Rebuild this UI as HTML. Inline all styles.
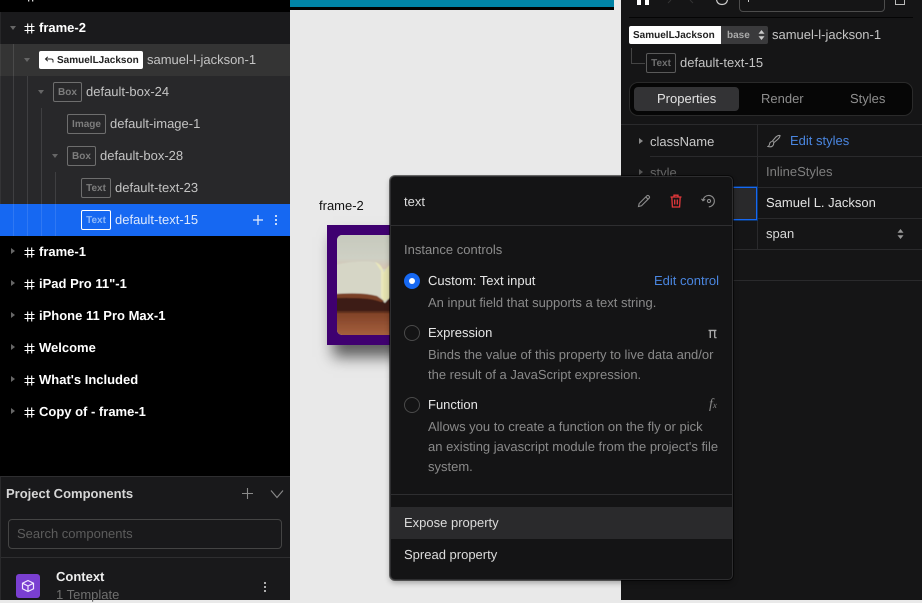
<!DOCTYPE html>
<html><head><meta charset="utf-8"><style>
*{box-sizing:border-box}
html,body{margin:0;padding:0;width:922px;height:600px;overflow:hidden;background:#e9e9e9;font-family:"Liberation Sans",sans-serif;text-rendering:geometricPrecision}
.a{position:absolute}
.t{position:absolute;white-space:nowrap;font-size:13px;line-height:16px}
.n{color:#c4c4c4}
.b{color:#fff;font-weight:700}
.tag{position:absolute;height:20px;border:1px solid #6e6e6e;border-radius:2px;color:#7d7d7d;font-size:10px;font-weight:700;line-height:20px;text-align:center}
.tri{position:absolute;width:0;height:0;border-left:3.5px solid transparent;border-right:3.5px solid transparent;border-top:4px solid #666}
.trr{position:absolute;width:0;height:0;border-top:3.5px solid transparent;border-bottom:3.5px solid transparent;border-left:4px solid #666}
.vl{position:absolute;width:1px;background:rgba(255,255,255,.11)}
.hash{position:absolute;width:11px;height:11px}
.desc{position:absolute;white-space:nowrap;font-size:13px;line-height:20px;color:#8a8a8a}
</style></head><body>

<!-- canvas -->
<div class="a" style="left:290px;top:0;width:324px;height:7px;background:#0083a6"></div>
<div class="a" style="left:290px;top:7px;width:324px;height:3px;background:#000"></div>
<div class="t" style="left:319px;top:198px;color:#111">frame-2</div>
<div class="a" style="left:327px;top:225px;width:100px;height:120px;background:#3f0070;box-shadow:6px 12px 14px rgba(0,0,0,.6)"></div>
<svg class="a" style="left:337px;top:235px;border-radius:5px;background:#d6d6c6" width="60" height="100" viewBox="0 0 60 100">
<defs><linearGradient id="bg" x1="0" y1="0" x2="0" y2="1"><stop offset="0" stop-color="#c6c9bd"/><stop offset=".7" stop-color="#ced0c4"/><stop offset="1" stop-color="#d6c4b2"/></linearGradient>
<linearGradient id="tb" x1="0" y1="0" x2="0" y2="1"><stop offset="0" stop-color="#7e4026"/><stop offset="1" stop-color="#a8623f"/></linearGradient>
<filter id="sf"><feGaussianBlur stdDeviation=".6"/></filter></defs>
<g filter="url(#sf)">
<rect x="-2" y="-2" width="64" height="104" fill="#d6d6c6"/>
<rect x="-2" y="-2" width="64" height="36" fill="url(#bg)"/>
<path d="M-2 30 Q20 25 38 27 Q44 29 46 36 L46 60 L-2 60Z" fill="#d6d6c6"/>
<path d="M38 27 Q45 29 47 38 L47 66 L44 62 L44 36Z" fill="#e9e7bc"/>
<path d="M46 40 Q50 28 62 27 L62 60 L46 66Z" fill="#e4e2b0"/>
<rect x="-2" y="76" width="64" height="26" fill="url(#tb)"/>
<path d="M-2 60 Q26 58 40 62 Q46 66 48 68 Q52 62 62 58 L62 78 L-2 78Z" fill="#3d1a12"/>
<path d="M-2 59 Q26 57 40 61 L47 66 L44 67 Q34 62 -2 63Z" fill="#7a4026"/>
<rect x="-2" y="76" width="64" height="2" fill="#5d2f1c"/>
</g>
</svg>

<!-- left panel -->
<div class="a" style="left:0;top:0;width:290px;height:476px;background:#000"></div>
<div class="a" style="left:0;top:12px;width:290px;height:32px;background:#1a1a1c"></div>
<div class="a" style="left:0;top:44px;width:290px;height:32px;background:#343434"></div>
<div class="a" style="left:0;top:76px;width:290px;height:128px;background:#28282a"></div>
<div class="a" style="left:0;top:204px;width:290px;height:32px;background:#1668f2"></div>
<div class="vl" style="left:13px;top:44px;height:192px"></div>
<div class="vl" style="left:27px;top:76px;height:160px"></div>
<div class="vl" style="left:41px;top:108px;height:128px"></div>
<div class="vl" style="left:55px;top:172px;height:64px"></div>
<div class="a" style="left:0;top:12px;width:1px;height:192px;background:rgba(255,255,255,.06)"></div>

<svg width="0" height="0" style="position:absolute"><defs><g id="h" fill="none" stroke="#fff" stroke-width="1.1"><path d="M3.700 .5V10.500M7.700 .5V10.500M.5 3.500H10.500M.5 7.500H10.500"/></g></defs></svg>

<!-- top cut row -->
<svg class="hash" style="left:25px;top:-9px"><use href="#h"/></svg>

<!-- frame-2 -->
<div class="tri" style="left:10px;top:26px"></div>
<svg class="hash" style="left:24px;top:23px"><use href="#h"/></svg>
<div class="t b" style="left:39px;top:20px">frame-2</div>

<div class="tri" style="left:24px;top:58px"></div>
<div class="a" style="left:39px;top:51px;width:104px;height:18px;background:#fff;border-radius:2px"></div>
<svg class="a" style="left:44px;top:55px" width="10" height="10" viewBox="0 0 10 10" fill="none" stroke="#222" stroke-width="1"><path d="M9 7.500V5.500Q9 4 7 4H1.500M3.800 1.800L1.500 4L3.800 6.200"/></svg>
<div class="t" style="left:57px;top:53px;font-size:10px;font-weight:700;color:#222">SamuelLJackson</div>
<div class="t n" style="left:147px;top:52px">samuel-l-jackson-1</div>

<div class="tri" style="left:38px;top:90px"></div>
<div class="tag" style="left:53px;top:82px;width:29px">Box</div>
<div class="t n" style="left:86px;top:84px">default-box-24</div>

<div class="tag" style="left:67px;top:114px;width:39px">Image</div>
<div class="t n" style="left:110px;top:116px">default-image-1</div>

<div class="tri" style="left:52px;top:154px"></div>
<div class="tag" style="left:67px;top:146px;width:29px">Box</div>
<div class="t n" style="left:100px;top:148px">default-box-28</div>

<div class="tag" style="left:81px;top:178px;width:30px">Text</div>
<div class="t n" style="left:115px;top:180px">default-text-23</div>

<div class="tag" style="left:81px;top:210px;width:30px;border-color:#fff;color:#8db8fa">Text</div>
<div class="t" style="left:115px;top:212px;color:#dce8fd">default-text-15</div>
<svg class="a" style="left:252px;top:214px" width="12" height="12" fill="none" stroke="#e8effc" stroke-width="1.2"><path d="M6 1V11M1 6H11"/></svg>
<div class="a" style="left:275px;top:215px;width:2.400px;height:2.400px;background:#fff;border-radius:50%;box-shadow:0 4px 0 #fff,0 8px 0 #fff"></div>

<div class="trr" style="left:11px;top:248px"></div>
<svg class="hash" style="left:24px;top:247px"><use href="#h"/></svg>
<div class="t b" style="left:39px;top:244px">frame-1</div>
<div class="trr" style="left:11px;top:280px"></div>
<svg class="hash" style="left:24px;top:279px"><use href="#h"/></svg>
<div class="t b" style="left:39px;top:276px">iPad Pro 11"-1</div>
<div class="trr" style="left:11px;top:312px"></div>
<svg class="hash" style="left:24px;top:311px"><use href="#h"/></svg>
<div class="t b" style="left:39px;top:308px">iPhone 11 Pro Max-1</div>
<div class="trr" style="left:11px;top:344px"></div>
<svg class="hash" style="left:24px;top:343px"><use href="#h"/></svg>
<div class="t b" style="left:39px;top:340px">Welcome</div>
<div class="trr" style="left:11px;top:376px"></div>
<svg class="hash" style="left:24px;top:375px"><use href="#h"/></svg>
<div class="t b" style="left:39px;top:372px">What's Included</div>
<div class="trr" style="left:11px;top:408px"></div>
<svg class="hash" style="left:24px;top:407px"><use href="#h"/></svg>
<div class="t b" style="left:39px;top:404px">Copy of - frame-1</div>

<!-- project components -->
<div class="a" style="left:0;top:476px;width:290px;height:124px;background:#19191b;border-top:1px solid #2e2e30;border-left:1px solid #2a2a2c"></div>
<div class="t" style="left:6px;top:486px;font-weight:700;color:#d6d6d6">Project Components</div>
<svg class="a" style="left:241px;top:487px" width="13" height="13" fill="none" stroke="#8a8a8a" stroke-width="1.1"><path d="M6.500 1V12M1 6.500H12"/></svg>
<svg class="a" style="left:270px;top:489px" width="14" height="10" fill="none" stroke="#8a8a8a" stroke-width="1.1"><path d="M1 1.500L7 8.500L13 1.500"/></svg>
<div class="a" style="left:8px;top:519px;width:274px;height:30px;border:1px solid #444;border-radius:4px"></div>
<div class="t" style="left:17px;top:526px;color:#5c5c5c">Search components</div>
<div class="a" style="left:1px;top:557px;width:289px;height:1px;background:#2e2e30"></div>
<div class="a" style="left:16px;top:574px;width:24px;height:24px;background:#7a3fd1;border-radius:3px"></div>
<svg class="a" style="left:21px;top:579px" width="14" height="14" viewBox="0 0 14 14" fill="none" stroke="#f2e9ff" stroke-width="1.200"><path d="M7 1.500L12.500 4.200V9.800L7 12.500L1.500 9.800V4.200ZM1.500 4.200L7 7L12.500 4.200M7 7V12.500"/></svg>
<div class="t b" style="left:56px;top:569px;color:#eee">Context</div>
<div class="t" style="left:56px;top:587px;color:#707070">1 Template</div>
<div class="a" style="left:264px;top:582px;width:2.400px;height:2.400px;background:#ddd;border-radius:50%;box-shadow:0 4px 0 #ddd,0 8px 0 #ddd"></div>

<!-- right panel -->
<div class="a" style="left:621px;top:0;width:301px;height:600px;background:#151516"></div>
<div class="a" style="left:637px;top:0;width:4px;height:5px;background:#fff"></div>
<div class="a" style="left:645px;top:0;width:4px;height:5px;background:#fff"></div>
<svg class="a" style="left:666px;top:0" width="30" height="6" fill="none" stroke="#333" stroke-width="1"><path d="M5 0L2 3M24 0L27 3"/></svg>
<svg class="a" style="left:715px;top:0" width="14" height="6" fill="none" stroke="#ccc" stroke-width="1.200"><path d="M1.500 0Q2.500 4.500 7 4.500Q11.500 4.500 12.500 0"/></svg>
<div class="a" style="left:739px;top:-10px;width:146px;height:22px;border:1px solid #4c4c4c;border-radius:4px"></div>
<div class="a" style="left:748px;top:0;width:1px;height:2px;background:#ccc"></div>
<div class="a" style="left:895px;top:0;width:10px;height:5px;border:1px solid #bbb;border-top:0"></div>
<div class="a" style="left:629px;top:17px;width:284px;height:1px;background:#050505"></div>

<div class="a" style="left:629px;top:26px;width:92px;height:18px;background:#fff;border-radius:2px 0 0 2px"></div>
<div class="t" style="left:633px;top:28px;font-size:10px;font-weight:700;color:#222">SamuelLJackson</div>
<div class="a" style="left:721px;top:26px;width:47px;height:18px;background:#3a3a3c;border-radius:0 2px 2px 0"></div>
<div class="t" style="left:727px;top:28px;font-size:10px;font-weight:700;color:#aaa">base</div>
<svg class="a" style="left:758px;top:30px" width="7" height="10" fill="#ccc"><path d="M3.500 0L6.500 3.800H.5ZM3.500 10L.5 6.200H6.500Z"/></svg>
<div class="t n" style="left:772px;top:27px">samuel-l-jackson-1</div>
<div class="a" style="left:631px;top:48px;width:14px;height:16px;border-left:1px solid #444;border-bottom:1px solid #444"></div>
<div class="tag" style="left:646px;top:53px;width:30px;color:#707070;border-color:#5a5a5a">Text</div>
<div class="t n" style="left:680px;top:55px">default-text-15</div>

<div class="a" style="left:629px;top:82px;width:284px;height:34px;background:#060606;border:1px solid #2a2a2a;border-radius:9px"></div>
<div class="a" style="left:634px;top:87px;width:105px;height:24px;background:#333335;border-radius:4px"></div>
<div class="t" style="left:657px;top:91px;color:#e4e4e4">Properties</div>
<div class="t" style="left:761px;top:91px;color:#8e8e8e">Render</div>
<div class="t" style="left:850px;top:91px;color:#8e8e8e">Styles</div>

<div class="a" style="left:621px;top:124px;width:301px;height:1px;background:#2a2a2c"></div>
<div class="a" style="left:757px;top:125px;width:1px;height:124px;background:#2a2a2c"></div>
<div class="a" style="left:650px;top:156px;width:272px;height:1px;background:#2a2a2c"></div>
<div class="a" style="left:757px;top:187px;width:165px;height:1px;background:#2a2a2c"></div>
<div class="a" style="left:757px;top:218px;width:165px;height:1px;background:#2a2a2c"></div>
<div class="a" style="left:621px;top:249px;width:301px;height:1px;background:#2a2a2c"></div>
<div class="a" style="left:621px;top:280px;width:301px;height:1px;background:#2a2a2c"></div>
<div class="trr" style="left:639px;top:138px;border-left-color:#8a8a8a"></div>
<div class="t" style="left:650px;top:134px;color:#c8c8c8">className</div>
<svg class="a" style="left:767px;top:134px" width="14" height="14" viewBox="0 0 14 14" fill="none" stroke="#999" stroke-width="1.100"><path d="M13 1.500Q10.500 1 8 4L5.500 7L7 8.500L10 6Q13 3.500 13 1.500ZM5 7.500Q2.500 8 2.500 10.500Q2 12 1 12.500Q4.500 13.500 6 11.500Q7 10 6.500 8.800"/></svg>
<div class="t" style="left:790px;top:133px;color:#4a86e0">Edit styles</div>
<div class="trr" style="left:639px;top:169px;border-left-color:#555"></div>
<div class="t" style="left:650px;top:165px;color:#666">style</div>
<div class="t" style="left:766px;top:164px;color:#7e7e7e">InlineStyles</div>
<div class="a" style="left:700px;top:187px;width:57px;height:33px;background:#29292b;border:1px solid #1668f2;box-shadow:0 0 0 1px #0d3670"></div>
<div class="t" style="left:766px;top:195px;color:#e2e2e2">Samuel L. Jackson</div>
<div class="t" style="left:766px;top:226px;color:#d8d8d8">span</div>
<svg class="a" style="left:897px;top:229px" width="7" height="10" fill="#999"><path d="M3.500 0L6.500 3.800H.5ZM3.500 10L.5 6.200H6.500Z"/></svg>

<!-- popover -->
<div class="a" style="left:390px;top:176px;width:343px;height:404px;background:#141415;border:1px solid #2e2e30;border-radius:5px;box-shadow:0 0 0 1px rgba(0,0,0,.55),0 3px 6px rgba(0,0,0,.3)"></div>
<div class="t" style="left:404px;top:194px;color:#dedede">text</div>
<svg class="a" style="left:637px;top:194px" width="14" height="14" viewBox="0 0 14 14" fill="none" stroke="#8c8c8c" stroke-width="1.100"><path d="M1.500 12.500L2.200 9.500L9.800 1.900Q10.800 1 11.800 1.900L12.100 2.200Q13 3.200 12.100 4.200L4.500 11.800ZM8.800 3L11 5.200"/></svg>
<svg class="a" style="left:669px;top:194px" width="14" height="14" viewBox="0 0 14 14" fill="none" stroke="#e5383b" stroke-width="1.300"><path d="M1.500 3H12.500M5 3V1.200H9V3M2.800 3L3.400 13H10.600L11.200 3M5.700 5.500V10.500M8.300 5.500V10.500"/></svg>
<svg class="a" style="left:701px;top:194px" width="15" height="14" viewBox="0 0 15 14" fill="none" stroke="#8c8c8c" stroke-width="1.100"><path d="M2 6.500A5.700 5.700 0 1 1 7.800 12.800M.5 4.800L2 6.800L4.200 5.300"/><circle cx="8" cy="7" r="1.600"/></svg>
<div class="a" style="left:391px;top:225px;width:341px;height:1px;background:#2e2e30"></div>
<div class="t" style="left:404px;top:242px;color:#8c8c8c">Instance controls</div>

<div class="a" style="left:404px;top:273px;width:16px;height:16px;border-radius:50%;background:#1668f2"></div>
<div class="a" style="left:409px;top:278px;width:6px;height:6px;border-radius:50%;background:#fff"></div>
<div class="t" style="left:428px;top:273px;color:#e6e6e6">Custom: Text input</div>
<div class="t" style="left:654px;top:273px;color:#4a86e0">Edit control</div>
<div class="desc" style="left:428px;top:293px">An input field that supports a text string.</div>

<div class="a" style="left:404px;top:325px;width:16px;height:16px;border-radius:50%;border:1px solid #4a4a4a"></div>
<div class="t" style="left:428px;top:325px;color:#e6e6e6">Expression</div>
<div class="t" style="left:708px;top:325px;color:#aaa;font-size:15px;font-family:'DejaVu Sans',sans-serif">π</div>
<div class="desc" style="left:428px;top:345px">Binds the value of this property to live data and/or</div>
<div class="desc" style="left:428px;top:365px">the result of a JavaScript expression.</div>

<div class="a" style="left:404px;top:397px;width:16px;height:16px;border-radius:50%;border:1px solid #4a4a4a"></div>
<div class="t" style="left:428px;top:397px;color:#e6e6e6">Function</div>
<div class="t" style="left:709px;top:397px;color:#888;font-size:14px;font-family:'Liberation Serif',serif;font-style:italic">f<span style="font-size:9px">x</span></div>
<div class="desc" style="left:428px;top:417px">Allows you to create a function on the fly or pick</div>
<div class="desc" style="left:428px;top:437px">an existing javascript module from the project's file</div>
<div class="desc" style="left:428px;top:457px">system.</div>

<div class="a" style="left:391px;top:494px;width:341px;height:1px;background:#2e2e30"></div>
<div class="a" style="left:391px;top:507px;width:341px;height:32px;background:#2a2a2c"></div>
<div class="t" style="left:404px;top:515px;color:#dcdcdc">Expose property</div>
<div class="t" style="left:404px;top:547px;color:#dcdcdc">Spread property</div>

</body></html>
